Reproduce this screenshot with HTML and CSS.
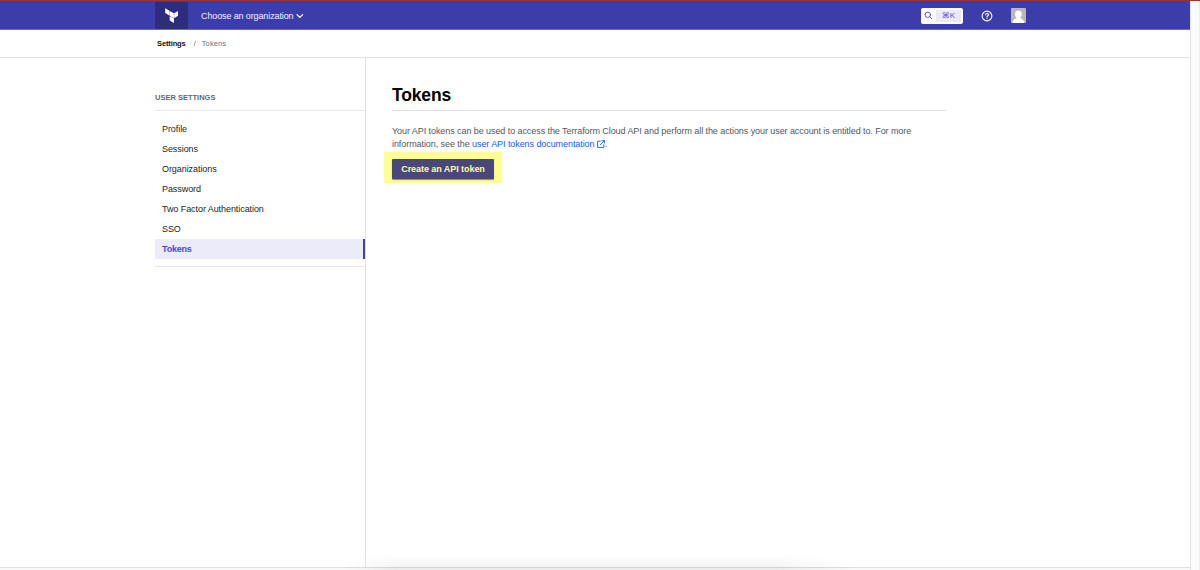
FILE: index.html
```html
<!DOCTYPE html>
<html lang="en">
<head>
<meta charset="utf-8">
<title>Tokens</title>
<link rel="stylesheet" href="styles.css">
</head>
<body>
<div class="window">
  <div class="page">
    <header class="topbar">
      <div class="logo">
        <svg width="13.5" height="15" viewBox="0 0 14 16" fill="#fff"><path d="M0 .3l4.500 2.600v5.100L0 5.400zM4.800 3.100l4.500 2.600v5.100L4.800 8.200zM9.600 5.700L14 3.100v5.100l-4.400 2.600zM4.800 8.700l4.500 2.600v4.700l-4.500-2.600z"/></svg>
      </div>
      <div class="org"><span>Choose an organization</span>
        <svg width="8" height="6" viewBox="0 0 8 6" fill="none" stroke="#fff" stroke-width="1.3" stroke-linecap="round" stroke-linejoin="round"><path d="M1 1.600L3.800 4.400l2.800-2.800"/></svg>
      </div>
      <div class="search">
        <svg width="9" height="9" viewBox="0 0 9 9" fill="none" stroke="#5a5bc4" stroke-linecap="round"><circle cx="3.800" cy="3.800" r="2.700"/><path d="M5.900 5.900L7.800 7.800"/></svg>
        <kbd class="keys"><span class="cmd">⌘</span>K</kbd>
      </div>
      <svg class="help" width="12" height="12" viewBox="0 0 12 12" fill="none" stroke="#fff" stroke-width="1.100" stroke-linecap="round"><circle cx="6" cy="6" r="4.900"/><path d="M4.600 4.800C4.600 3 7.500 3 7.500 4.800 7.500 5.800 6 5.800 6 6.900M6 8.500v.1"/></svg>
      <svg class="avatar" width="15" height="15" viewBox="0 0 16 15" preserveAspectRatio="none"><rect width="16" height="15" rx="1" fill="#b8b8bc"/><path d="M1.800 15c0-2.800 1.400-4 4.200-4.800C4.800 9 4.300 7.500 4.300 6c0-2.200 1.400-3.500 3.600-3.500s3.600 1.300 3.600 3.500c0 1.500-.5 3-1.700 4.200 2.800.8 4.300 2 4.300 4.800z" fill="#fff"/></svg>
    </header>
    <nav class="crumbs"><b>Settings</b><span class="slash">/</span><span class="current">Tokens</span></nav>
    <div class="columns">
      <aside class="sidebar">
        <h2 class="side-title">USER SETTINGS</h2>
        <ul class="menu">
          <li>Profile</li>
          <li>Sessions</li>
          <li>Organizations</li>
          <li>Password</li>
          <li>Two Factor Authentication</li>
          <li>SSO</li>
          <li class="active">Tokens</li>
        </ul>
      </aside>
      <main class="content">
        <h1 class="title">Tokens</h1>
        <p class="intro">Your API tokens can be used to access the Terraform Cloud API and perform all the actions your user account is entitled to. For more<br>information, see the <a class="link">user API tokens documentation <svg width="8" height="8" viewBox="0 0 8 8" fill="none" stroke="#1060ff" stroke-width=".9" stroke-linecap="round" stroke-linejoin="round"><path d="M3.300 1.200H.6v6.200h6.200V4.800M5 .6h2.400V3M7.300.7L3.200 4.800"/></svg></a>.</p>
        <div class="highlight"><button class="create">Create an API token</button></div>
      </main>
    </div>
    <footer class="bottom"></footer>
  </div>
  <div class="scrollbar"></div>
</div>
<div class="shade"></div>
</body>
</html>
```
FILE: styles.css
```css
* { box-sizing: border-box; }
body {
  margin: 0;
  font-family: "Liberation Sans", Arial, sans-serif;
  font-size: 9px;
  color: #1d1f24;
  background: #fff;
}
svg { display: block; flex: none; }
.window {
  display: flex;
  height: 570px;
  border-top: 1px solid #a3302f;
  overflow: hidden;
}
.page {
  flex: 1;
  display: flex;
  flex-direction: column;
}
.scrollbar {
  width: 10px;
  background: #fafafa;
  border-left: 1px solid #e6e6e6;
  border-right: 1px solid #ececec;
}
.topbar {
  height: 29px;
  display: flex;
  align-items: center;
  padding: 1px 164px 0 155px;
  background: #3d3daa;
  border-bottom: 1px solid #6868c8;
  color: #fff;
}
.logo {
  width: 33px;
  height: 27px;
  display: flex;
  align-items: center;
  justify-content: center;
  background: #2d2d79;
}
.org {
  display: flex;
  align-items: center;
  gap: 3px;
  margin-left: 13px;
  margin-right: auto;
  color: #f0f0fc;
}
.org span { padding-top: 1px; letter-spacing: -0.12px; }
.search {
  width: 42px;
  height: 16px;
  display: flex;
  align-items: center;
  gap: 3px;
  padding: 0 2px 0 3px;
  background: #fff;
  border-radius: 2px;
}
.keys {
  flex: 1;
  height: 12px;
  display: flex;
  align-items: center;
  justify-content: center;
  font: 8px "Liberation Sans", Arial, sans-serif;
  color: #5455c0;
  background: #e9e9f8;
  border-radius: 1px;
}
.cmd { font-family: "DejaVu Sans", sans-serif; font-size: 8px; }
.help { margin-left: 18px; }
.avatar { margin-left: 18px; }
.crumbs {
  height: 28px;
  display: flex;
  align-items: center;
  padding: 0 0 1px 157px;
  border-bottom: 1px solid #e3e4e8;
  font-size: 7.5px;
  color: #6b7080;
}
.crumbs b { color: #111; letter-spacing: -0.12px; }
.current { letter-spacing: 0.12px; }
.slash { margin: 0 6px 0 8px; }
.columns {
  flex: 1;
  display: flex;
}
.sidebar {
  width: 366px;
  padding-left: 155px;
  border-right: 1px solid #e1e2e7;
}
.side-title {
  height: 53px;
  margin: 0;
  padding-top: 35px;
  font-size: 7.5px;
  line-height: 10px;
  color: #626776;
  border-bottom: 1px solid #e8e8eb;
}
.menu {
  margin: 0;
  padding: 8px 0 7px;
  list-style: none;
  border-bottom: 1px solid #e4e5e9;
}
.menu li {
  height: 20px;
  padding-left: 7px;
  line-height: 20px;
  letter-spacing: -0.07px;
}
.menu .active {
  font-weight: bold;
  letter-spacing: -0.2px;
  color: #4848d2;
  background: #ebebf9;
  border-right: 2px solid #4040b2;
}
.content { width: 581px; padding: 26px 0 0 26px; }
.title {
  height: 27px;
  margin: 0;
  font-size: 17.5px;
  line-height: 22px;
  letter-spacing: -0.15px;
  color: #000;
  border-bottom: 1px solid #e4e4e7;
}
.intro {
  margin: 14px 0 0;
  line-height: 13px;
  letter-spacing: -0.073px;
  white-space: nowrap;
  color: #525761;
}
.link { color: #1060ff; }
.link svg { display: inline-block; vertical-align: -0.5px; }
.highlight {
  width: 118px;
  height: 31px;
  margin: 1px 0 0 -8px;
  padding: 7px 8px;
  background: #ffff94;
}
.create {
  display: block;
  width: 102px;
  height: 20px;
  padding: 0;
  border: 0;
  border-radius: 1px;
  font: bold 9px "Liberation Sans", Arial, sans-serif;
  letter-spacing: -0.06px;
  color: #ffff9c;
  background: #4a487a;
  box-shadow: 0 1px 1px #8c8a68;
}
.bottom {
  height: 3px;
  background: #f9f9f9;
  border-top: 1px solid #dedfe3;
}
.shade {
  position: absolute;
  left: 345px;
  top: 555px;
  width: 510px;
  height: 15px;
  background: linear-gradient(rgba(0, 0, 0, 0), rgba(0, 0, 0, 0.055));
  -webkit-mask-image: linear-gradient(90deg, transparent, #000 50px, #000 430px, transparent);
  mask-image: linear-gradient(90deg, transparent, #000 50px, #000 430px, transparent);
}
```
